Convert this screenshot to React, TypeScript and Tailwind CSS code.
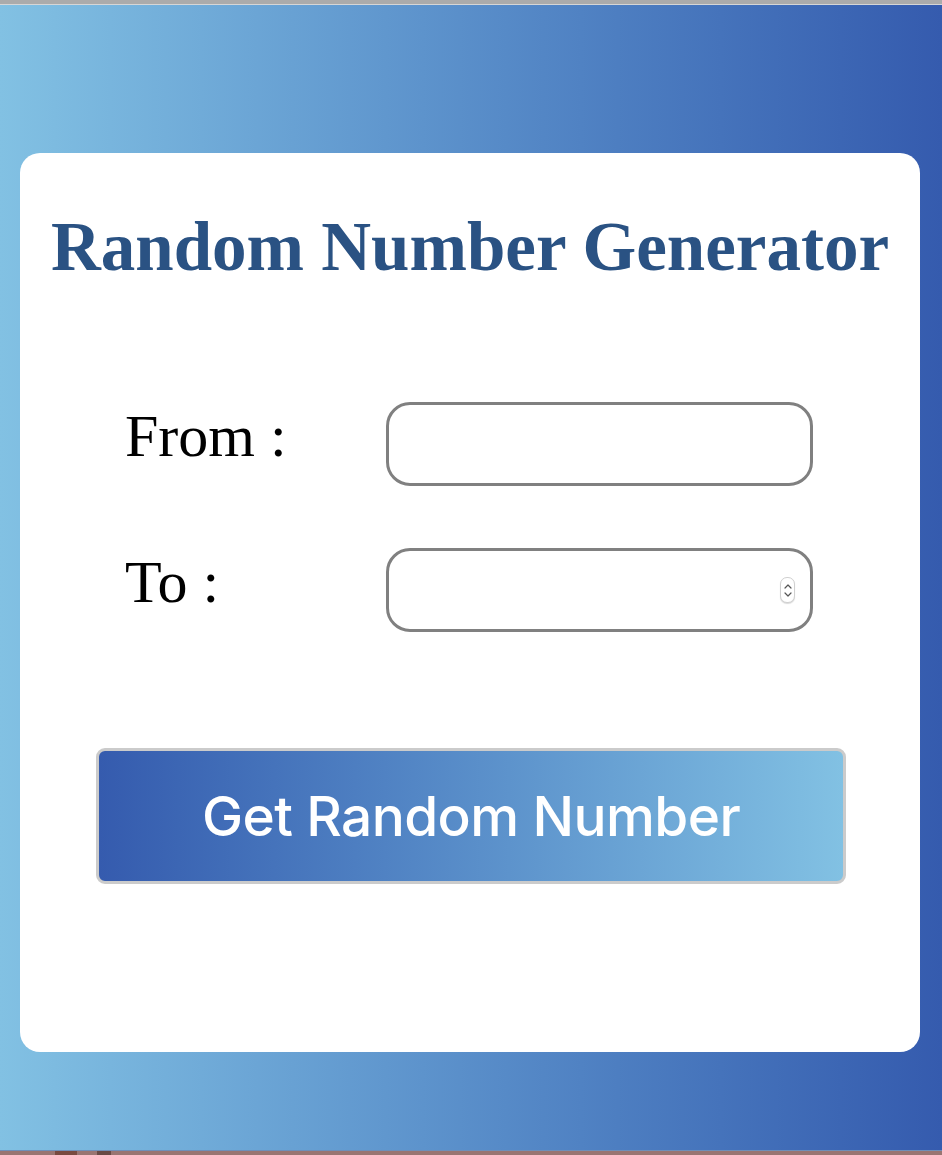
import React from 'react';

function App() {
  return (
    <div className="w-[942px] h-[1155px] flex flex-col overflow-hidden">
      {/* window edge */}
      <div className="h-[4px] bg-[#ababab]" />
      <div className="h-[1px] bg-[#d6d6d6]" />

      {/* page */}
      <main className="flex-1 bg-gradient-to-r from-[#82c1e3] to-[#355bae] pt-[148px] pl-[20px] pr-[22px]">
        <div className="bg-white rounded-[20px] h-[899px] pt-[58px] flex flex-col">
          <h1 className="text-center text-[#2a5283] text-[69px] leading-[72px] font-bold font-['Liberation_Serif',serif]">
            Random Number Generator
          </h1>

          <div className="mt-[119px] pl-[105px] grid grid-cols-[261px_427px] gap-y-[62px] items-center">
            <label className="text-[60px] leading-none text-black font-['Liberation_Serif',serif] pb-[16px]">
              From :
            </label>
            <input
              type="text"
              className="h-[84px] w-[427px] rounded-[24px] border-[3px] border-[#808080] bg-white outline-none"
            />

            <label className="text-[60px] leading-none text-black font-['Liberation_Serif',serif] pb-[16px]">
              To :
            </label>
            <div className="relative">
              <input
                type="text"
                className="h-[84px] w-[427px] rounded-[24px] border-[3px] border-[#808080] bg-white outline-none"
              />
              {/* spinner */}
              <div className="absolute left-[394px] top-[29px] w-[15px] h-[26px] rounded-[7px] border border-[#d0d0d0] bg-white shadow-[0_1px_1px_rgba(0,0,0,0.15)] flex flex-col items-center justify-center gap-[3px]">
                <svg width="8" height="5" viewBox="0 0 8 5" fill="none">
                  <path d="M1 4 L4 1 L7 4" stroke="#555" strokeWidth="1.2" strokeLinecap="round" strokeLinejoin="round" />
                </svg>
                <svg width="8" height="5" viewBox="0 0 8 5" fill="none">
                  <path d="M1 1 L4 4 L7 1" stroke="#555" strokeWidth="1.2" strokeLinecap="round" strokeLinejoin="round" />
                </svg>
              </div>
            </div>
          </div>

          <button className="mt-[116px] ml-[76px] w-[750px] h-[136px] rounded-[9px] border-[3px] border-[#cbcbcb] bg-gradient-to-r from-[#355bae] to-[#82c1e3] text-white text-[55px] font-['Inter',sans-serif] font-medium tracking-[-0.6px]">
            Get Random Number
          </button>
        </div>
      </main>

      {/* content peeking below */}
      <div className="h-[1px] bg-[#6f8fb8]" />
      <div className="h-[4px] bg-[#9a7572] flex">
        <div className="ml-[55px] w-[22px] bg-[#7a4a40]" />
        <div className="ml-[20px] w-[14px] bg-[#6a4a45]" />
      </div>
    </div>
  );
}

export default App;
